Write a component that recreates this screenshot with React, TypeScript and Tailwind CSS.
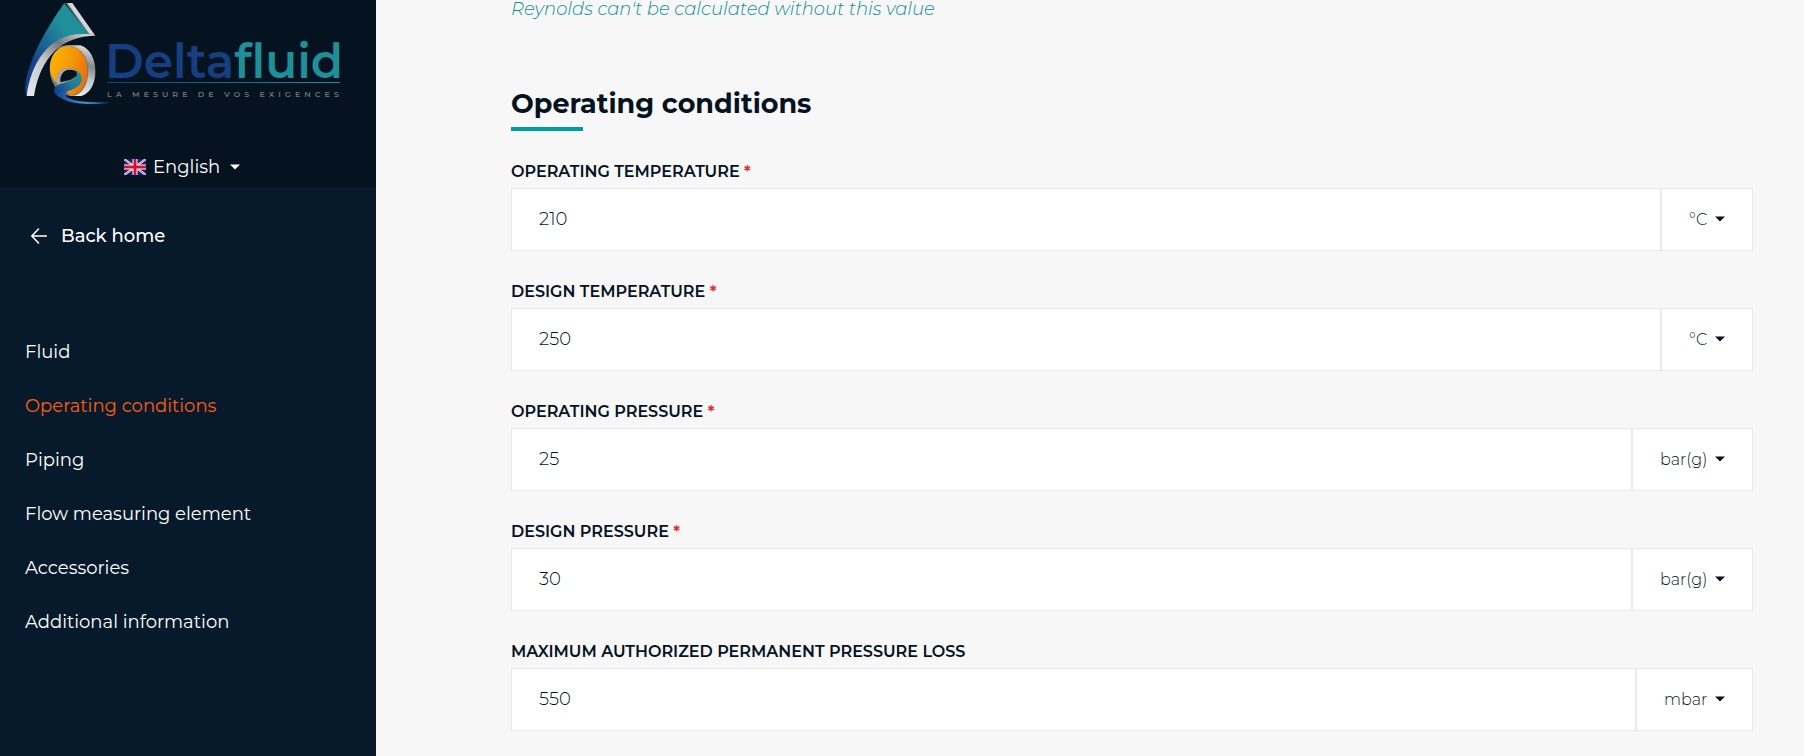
import { useState } from 'react'

interface Field {
  id: string
  label: string
  required: boolean
  value: string
  units: string[]
  unitWidth: string
}

const NAV_ITEMS = [
  'Fluid',
  'Operating conditions',
  'Piping',
  'Flow measuring element',
  'Accessories',
  'Additional information',
]

const FIELDS: Field[] = [
  { id: 'operating-temperature', label: 'Operating temperature', required: true, value: '210', units: ['°C', '°F', 'K'], unitWidth: 'w-[92px]' },
  { id: 'design-temperature', label: 'Design temperature', required: true, value: '250', units: ['°C', '°F', 'K'], unitWidth: 'w-[92px]' },
  { id: 'operating-pressure', label: 'Operating pressure', required: true, value: '25', units: ['bar(g)', 'bar(a)'], unitWidth: 'w-[121px]' },
  { id: 'design-pressure', label: 'Design pressure', required: true, value: '30', units: ['bar(g)', 'bar(a)'], unitWidth: 'w-[121px]' },
  { id: 'pressure-loss', label: 'Maximum authorized permanent pressure loss', required: false, value: '550', units: ['mbar', 'bar'], unitWidth: 'w-[117px]' },
]

function Caret({ className }: { className: string }) {
  return (
    <svg viewBox="0 0 10 6" className={`pointer-events-none absolute h-[6px] w-[10px] ${className}`} aria-hidden>
      <path d="M0 .4h10L5 5.600z" fill="currentColor" />
    </svg>
  )
}

function LogoMark() {
  return (
    <svg viewBox="0 0 300 330" className="h-[110px] w-[100px]" aria-hidden>
      <defs>
        <linearGradient id="roof" x1="50" y1="190" x2="190" y2="100" gradientUnits="userSpaceOnUse">
          <stop offset="0" stopColor="#143f8a" />
          <stop offset=".4" stopColor="#1c6496" />
          <stop offset=".8" stopColor="#1f8f99" />
        </linearGradient>
        <linearGradient id="sweep" x1="45" y1="290" x2="235" y2="100" gradientUnits="userSpaceOnUse">
          <stop offset="0" stopColor="#e6e7e8" />
          <stop offset=".4" stopColor="#c4c6c8" />
          <stop offset=".65" stopColor="#77797b" />
          <stop offset="1" stopColor="#e8e8e8" />
        </linearGradient>
        <linearGradient id="ring" x1="170" y1="290" x2="225" y2="140" gradientUnits="userSpaceOnUse">
          <stop offset="0" stopColor="#f1f1f1" />
          <stop offset=".4" stopColor="#c4c6c8" />
          <stop offset=".65" stopColor="#85878a" />
          <stop offset="1" stopColor="#e2e2e2" />
        </linearGradient>
        <linearGradient id="drop" x1="105" x2="218" gradientUnits="userSpaceOnUse" y1="190" y2="220">
          <stop offset="0" stopColor="#f9b000" />
          <stop offset=".5" stopColor="#f59a07" />
          <stop offset="1" stopColor="#ea6f05" />
        </linearGradient>
        <linearGradient id="stream" x1="190" y1="220" x2="130" y2="275" gradientUnits="userSpaceOnUse">
          <stop offset="0" stopColor="#1f8f99" />
          <stop offset=".45" stopColor="#1c7d98" />
          <stop offset="1" stopColor="#164591" />
        </linearGradient>
        <linearGradient id="tail" x1="125" x2="288" gradientUnits="userSpaceOnUse">
          <stop offset="0" stopColor="#164591" />
          <stop offset=".5" stopColor="#3e8fd2" />
          <stop offset="1" stopColor="#174f83" />
        </linearGradient>
      </defs>
      <path d="M153 9h19l69 98-19-4z" fill="#d6d7d9" />
      <path d="M153 9h4l68 95-5 1z" fill="#6d7073" />
      <path d="M148 9 222 103C145 104 72 160 35 288c-5-8-5-20-4-32C40 180 92 88 148 9z" fill="url(#roof)" />
      <path d="M35 288C48 188 104 92 222 103l19 4C142 108 76 170 57 288z" fill="url(#sweep)" />
      <path d="M130 145q12-9 30-9h36c30 10 45 42 45 79 0 36-16 65-42 73h-36z" fill="url(#ring)" />
      <path d="M160 137c34 0 60 32 60 75 0 40-19 72-45 75-40 4-71-36-71-80 0-40 24-70 56-70z" fill="#77797c" />
      <path d="M160 139c33 0 57 31 57 73 0 38-18 68-43 73-14-2-24-8-20-12 28-4 46-18 46-36 0-17-16-32-38-32-29 0-43 22-34 47-14-12-23-29-23-48 0-38 23-65 55-65z" fill="url(#drop)" />
      <path d="M128 256c-13-25 4-51 31-51 15 0 28 7 35 17l-50 28z" fill="#a5a7a9" />
      <path d="M137 247c-5-19 8-38 27-38 14 0 24 6 29 14l-26 16z" fill="#06131d" />
      <path d="M179 208c14 8 22 19 21 31-2 18-23 28-43 34-13 4-17 12-10 22-17-3-29-13-29-23 0-28 54-20 65-40 5-9 2-18-4-24z" fill="url(#stream)" />
      <path d="M118 268c6 13 30 4 42 7-13 6-10 13 2 20 22 12 70 12 126 13-56 7-105 5-131-5-24-9-40-20-39-35z" fill="url(#tail)" />
    </svg>
  )
}

function Logo() {
  return (
    <a href="#" className="ml-[15px] flex h-[110px] items-start" aria-label="Deltafluid">
      <LogoMark />
      <span className="-ml-[10px] mt-[41px] w-[235px] shrink-0">
        <span className="block text-[47px] leading-[41px] font-semibold text-[#163f82]">
          Delta<span className="text-[#1f8f99]">fluid</span>
        </span>
        <span className="ml-[2px] block h-px bg-linear-to-r from-[#163f82] to-[#1f8f99]" />
        <span className="ml-[2px] mt-[6px] block text-[8px] leading-[10px] font-semibold tracking-[4px] whitespace-nowrap text-[#6d7276]">
          LA MESURE DE VOS EXIGENCES
        </span>
      </span>
    </a>
  )
}

function UkFlag() {
  return (
    <svg viewBox="0 0 22 16" className="h-4 w-[22px]" aria-hidden>
      <rect width="22" height="16" rx="1" fill="#0a2472" />
      <path d="M0 0l22 16M22 0L0 16" stroke="#fff" strokeWidth="2.200" />
      <path d="M0 0l22 16M22 0L0 16" stroke="#d80f35" strokeWidth=".7" />
      <path d="M11 0v16M0 8h22" stroke="#fff" strokeWidth="5" />
      <path d="M11 0v16M0 8h22" stroke="#d80f35" strokeWidth="3" />
    </svg>
  )
}

function Sidebar() {
  const [active, setActive] = useState('Operating conditions')

  return (
    <aside className="w-[376px] shrink-0 bg-[#071a2b] text-white">
      <div className="h-[187px] bg-[#04131f]">
        <Logo />
        <div className="mt-[41px] flex items-center justify-center gap-[7px] pr-3">
          <UkFlag />
          <div className="relative">
            <select
              aria-label="Language"
              className="block w-[87px] appearance-none bg-transparent text-[18px] leading-8 outline-none"
            >
              <option>English</option>
              <option>Français</option>
            </select>
            <Caret className="top-[13px] right-0" />
          </div>
        </div>
      </div>

      <a href="#" className="mt-[33px] ml-[31px] flex items-center gap-[14px] text-[18px] leading-8 font-medium">
        <svg viewBox="0 0 16 16" className="size-4" fill="none" stroke="currentColor" strokeWidth="1.500" strokeLinecap="round" aria-hidden>
          <path d="M15.500 8H1M7.500 1 .8 8l6.700 7" />
        </svg>
        Back home
      </a>

      <nav className="mt-[73px] ml-[25px]">
        <ul>
          {NAV_ITEMS.map((item) => (
            <li key={item}>
              <a
                href="#"
                onClick={() => setActive(item)}
                className={`block text-[18px] leading-[54px] ${item === active ? 'text-[#ff5c10]' : ''}`}
              >
                {item}
              </a>
            </li>
          ))}
        </ul>
      </nav>
    </aside>
  )
}

function FieldRow({ field }: { field: Field }) {
  const [value, setValue] = useState(field.value)

  return (
    <div>
      <label htmlFor={field.id} className="block text-[16px] leading-6 font-semibold uppercase">
        {field.label}
        {field.required && <span className="text-[#e8232a]"> *</span>}
      </label>
      <div className="mt-1 flex h-[63px]">
        <input
          id={field.id}
          type="text"
          value={value}
          onChange={(e) => setValue(e.target.value)}
          className="min-w-0 flex-1 border border-[#e9e9e9] bg-white px-[27px] text-[18px] font-light outline-none"
        />
        <div className={`relative shrink-0 ${field.unitWidth}`}>
          <select
            aria-label={`${field.label} unit`}
            className="size-full appearance-none border border-[#e9e9e9] bg-white pl-[27px] text-[16px] font-light outline-none"
          >
            {field.units.map((u) => (
              <option key={u}>{u}</option>
            ))}
          </select>
          <Caret className="top-7 right-7" />
        </div>
      </div>
    </div>
  )
}

export default function App() {
  return (
    <div className="flex min-h-screen bg-[#f7f7f7] font-['Montserrat','Inter',sans-serif] text-[#04131f]">
      <Sidebar />
      <main className="min-w-0 flex-1 pr-[51px] pl-[135px]">
        <p className="text-[18px] leading-[18px] font-light text-[#0f8f92] italic">
          Reynolds can't be calculated without this value
        </p>
        <h2 className="mt-[68px] text-[27px] leading-9 font-bold">Operating conditions</h2>
        <div className="mt-[5px] h-1 w-[72px] bg-[#009ca0]" />
        <form className="mt-[29px] flex flex-col gap-[29px] pb-6">
          {FIELDS.map((field) => (
            <FieldRow key={field.id} field={field} />
          ))}
        </form>
      </main>
    </div>
  )
}
